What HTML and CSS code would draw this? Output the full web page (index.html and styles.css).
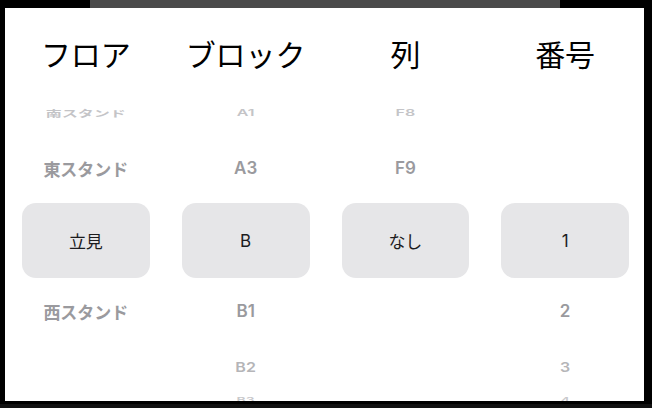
FILE: index.html
```html
<!DOCTYPE html>
<html lang="ja">
<head>
<meta charset="utf-8">
<title>座席選択</title>
<link rel="stylesheet" href="styles.css">
</head>
<body>
<div class="topbar"></div>
<div class="panel">
  <div class="col">
    <div class="head">フロア</div>
    <div class="item far up">南スタンド</div>
    <div class="item near up">東スタンド</div>
    <div class="item sel">立見</div>
    <div class="item near down">西スタンド</div>
  </div>
  <div class="col">
    <div class="head">ブロック</div>
    <div class="item far up">A1</div>
    <div class="item near up">A3</div>
    <div class="item sel">B</div>
    <div class="item near down">B1</div>
    <div class="item far down">B2</div>
    <div class="item edge">B3</div>
  </div>
  <div class="col">
    <div class="head">列</div>
    <div class="item far up">F8</div>
    <div class="item near up">F9</div>
    <div class="item sel">なし</div>
    <div class="item near down"></div>
  </div>
  <div class="col">
    <div class="head">番号</div>
    <div class="item far up"></div>
    <div class="item near up"></div>
    <div class="item sel">1</div>
    <div class="item near down">2</div>
    <div class="item far down">3</div>
    <div class="item edge">4</div>
  </div>
</div>
<div class="bottombar"></div>
</body>
</html>
```

FILE: styles.css
```css
html, body {
  margin: 0;
  padding: 0;
  background: #000;
}

body {
  width: 652px;
  height: 408px;
  overflow: hidden;
  font-family: "Inter", "Noto Sans CJK JP", sans-serif;
}

.topbar {
  margin-left: 90px;
  width: 470px;
  height: 8px;
  background: #4a4a4a;
}

.panel {
  margin-left: 5px;
  width: 639px;
  height: 393px;
  background: #fff;
  overflow: hidden;
  display: grid;
  grid-template-columns: repeat(4, 1fr);
}

.col {
  display: flex;
  flex-direction: column;
  padding: 0 15px 0 17px;
  min-width: 0;
}

.head {
  height: 92px;
  padding-bottom: 2px;
  box-sizing: border-box;
  display: flex;
  align-items: center;
  justify-content: center;
  font-family: "Noto Sans CJK JP", sans-serif;
  font-size: 30px;
  font-weight: 400;
  color: #000;
  flex: none;
}

.item {
  display: flex;
  align-items: center;
  justify-content: center;
  flex: none;
  white-space: nowrap;
}

.far {
  height: 26px;
  font-size: 16px;
  font-weight: 600;
  color: #c4c4c7;
}

.far.up {
  transform: scaleY(0.55);
}

.far.down {
  margin-top: 15px;
  transform: scaleY(0.8);
  color: #b5b5b8;
}

.near {
  height: 56px;
  font-size: 17px;
  font-weight: 600;
  color: #9a9a9e;
}

.near.up {
  margin: 14px 0 7px;
}

.near.down {
  margin-top: 5px;
}

.sel {
  height: 75px;
  border-radius: 14px;
  background: #e6e6e8;
  font-size: 17px;
  color: #1c1c1e;
}

.edge {
  height: 20px;
  margin-top: 10px;
  font-size: 14px;
  font-weight: 600;
  color: #c8c8cb;
  transform: scaleY(0.5);
}

.bottombar {
  height: 7px;
  background: #111;
  border-top: 3px solid #000;
}
```
